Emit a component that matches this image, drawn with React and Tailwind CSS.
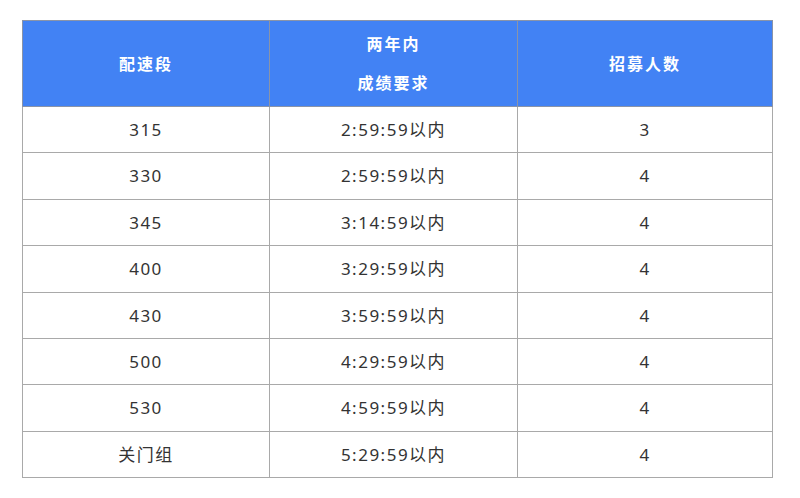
const rows = [
  ["315", "2:59:59以内", "3"],
  ["330", "2:59:59以内", "4"],
  ["345", "3:14:59以内", "4"],
  ["400", "3:29:59以内", "4"],
  ["430", "3:59:59以内", "4"],
  ["500", "4:29:59以内", "4"],
  ["530", "4:59:59以内", "4"],
  ["关门组", "5:29:59以内", "4"],
];

const font = { fontFamily: '"Noto Sans", "Noto Sans CJK SC", sans-serif' };

export default function App() {
  return (
    <div className="h-[498px] w-[800px] bg-white pl-[22px] pt-[20px]" style={font}>
      <table className="w-[750px] table-fixed border-collapse">
        <colgroup>
          <col className="w-[247px]" />
          <col className="w-[248px]" />
          <col className="w-[255px]" />
        </colgroup>
        <thead>
          <tr className="h-[86px] bg-[#4282f4] text-[16px] font-bold tracking-[2px] text-white">
            <th className="border border-[#8a94a8] text-center">配速段</th>
            <th className="border border-[#8a94a8] text-center leading-[39px]">
              <div>两年内</div>
              <div>成绩要求</div>
            </th>
            <th className="border border-[#8a94a8] text-center">招募人数</th>
          </tr>
        </thead>
        <tbody>
          {rows.map((r, i) => (
            <tr key={i} className="h-[46.4px] text-[17px] tracking-[1.5px] text-[#333]">
              {r.map((c, j) => (
                <td key={j} className="border border-[#a9a9a9] p-0 text-center">
                  {c}
                </td>
              ))}
            </tr>
          ))}
        </tbody>
      </table>
    </div>
  );
}
